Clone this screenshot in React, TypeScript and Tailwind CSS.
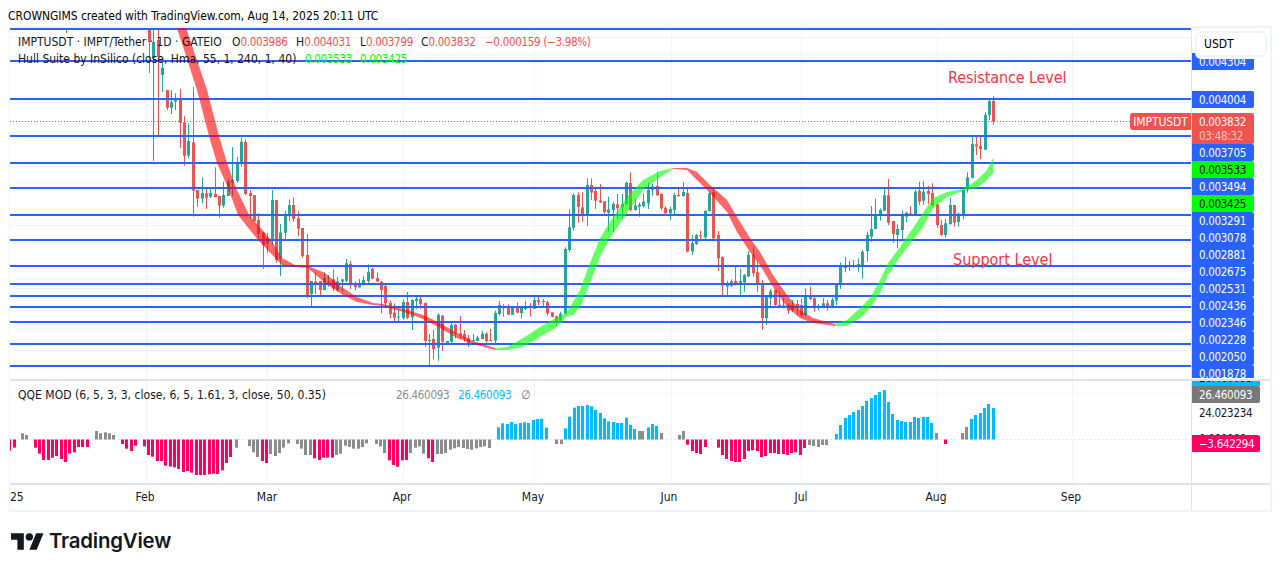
import React from "react";

const G = "#26a69a";
const R = "#ef5350";
type C = [number, number, number, number, number, number];
// [x, high, bodyTop, bodyBottom, low, up(1)/down(0)] in the 3x crop's coordinates
const groups: { x0: number; y0: number; c: C[] }[] = [
  { x0: 0, y0: 0, c: [
    [66*3,84,84,90,99,0],[149*3,84,90,126,219,0],[153*3,84,126,174,483,1],[158*3,84,120,171,411,0],[162*3,171,204,225,276,1],
  ] },
  { x0: 145, y0: 90, c: [
    [67,0,0,53,60,0],[79,0,37,53,72,1],[91,10,25,35,60,1],[106,-3,25,98,173,0],[118,78,97,197,227,0],[130,100,153,197,205,1],
    [145,-9,157,302,380,0],[157,300,300,326,350,0],[172,262,309,326,340,1],[184,292,310,323,357,0],[196,292,309,320,324,1],
    [211,232,312,321,322,0],[223,318,318,347,383,0],[235,275,315,347,353,1],[250,265,275,318,318,1],[262,172,270,278,318,1],
    [277,200,216,273,279,1],[289,143,155,218,230,1],[301,148,156,312,315,0],[316,300,309,318,385,0],[328,315,315,393,395,0],
    [340,370,390,432,450,0],[355,425,428,465,537,0],[367,430,445,460,488,1],[382,300,330,450,465,1],[394,330,330,510,518,0],
    [406,402,427,505,558,1],[421,362,373,428,447,1],[433,328,345,373,393,1],[445,323,345,387,395,0],[460,365,385,416,438,0],
    [472,414,414,498,503,0],[487,432,495,617,625,0],[499,573,573,612,650,1],[511,548,575,580,612,0],[526,573,573,600,615,0],
    [538,547,564,600,600,1],[550,555,577,583,590,1],[565,538,568,595,603,0],[577,561,574,600,605,1],
  ] },
  { x0: 340, y0: 170, c: [
    [7,327,328,335,365,1],[19,267,280,332,337,1],[31,273,282,345,357,0],[46,335,342,352,360,0],[58,327,342,352,353,1],
    [70,318,330,345,347,1],[85,283,306,333,342,1],[97,293,297,326,328,0],[112,307,324,335,336,0],[124,333,336,360,430,0],
    [136,345,348,400,412,0],[151,392,398,432,445,0],[163,400,428,443,455,0],[175,420,440,442,453,1],[190,388,396,444,448,1],
    [202,366,396,443,447,0],[217,388,390,442,480,1],[229,378,387,393,417,1],[241,378,387,402,416,0],[256,397,399,513,530,0],
    [268,492,510,512,585,1],[280,480,507,537,568,0],[295,430,435,533,572,1],[307,435,437,515,543,0],[322,513,513,521,523,1],
    [334,460,465,515,520,1],[346,462,464,490,505,0],[361,438,490,497,505,0],[373,480,492,505,515,0],[385,495,505,520,530,0],
    [400,492,510,513,515,1],[412,497,503,513,514,1],[427,483,491,507,508,1],[439,487,491,513,518,0],[451,477,510,513,514,0],
    [466,422,429,512,524,1],[478,393,405,432,438,1],[490,403,408,415,440,0],[505,403,408,434,435,0],[517,408,408,434,435,1],
    [532,397,412,428,430,0],[544,408,408,429,445,1],[556,392,409,417,420,1],[571,400,410,413,440,0],[583,380,390,416,417,1],
    [595,380,390,396,405,0],[610,387,393,395,408,1],[622,392,396,430,436,0],[637,427,427,441,442,0],[649,437,439,455,467,0],
    [661,425,431,453,457,1],[676,232,237,431,433,1],[688,118,172,240,245,1],[700,70,75,173,182,1],
  ] },
  { x0: 560, y0: 160, c: [
    [55,97,105,140,188,0],[67,97,142,165,185,0],[82,55,75,165,198,1],[94,55,75,98,120,0],[106,80,93,122,147,0],[121,72,121,127,129,0],
    [133,124,124,156,168,0],[145,110,148,158,215,1],[160,125,132,150,217,1],[172,102,133,145,175,0],[187,102,132,142,177,1],
    [199,65,68,133,135,1],[211,37,69,150,155,0],[226,115,137,150,152,1],[238,128,134,140,170,1],[250,100,125,138,142,1],
    [265,68,90,130,147,1],[277,70,79,90,107,1],[292,35,78,106,108,0],[304,100,102,145,150,0],[316,138,144,160,162,0],
    [331,140,147,160,180,1],[343,98,105,150,165,1],[355,82,105,107,110,0],[370,67,96,108,110,1],[382,80,99,275,277,0],
    [397,225,249,274,285,1],[409,222,225,252,255,1],[421,212,226,229,240,0],[436,150,153,232,243,1],[448,95,100,153,155,1],
    [460,85,97,235,238,0],[475,213,225,295,333,0],[487,289,291,377,412,0],[502,362,374,380,406,1],[514,358,364,378,380,1],
    [526,320,363,375,376,0],[541,326,363,375,410,1],[553,342,345,367,395,1],[565,273,285,349,352,1],[580,262,285,340,350,0],
    [592,305,337,372,397,0],
  ] },
  { x0: 760, y0: 90, c: [
    [7,570,578,684,720,0],[19,615,618,684,705,1],[31,597,604,624,655,1],[46,600,600,645,648,0],[58,605,645,652,654,0],
    [70,625,646,652,655,1],[85,640,645,662,672,0],[97,630,645,660,667,1],[112,630,642,648,677,0],[124,625,645,675,680,0],
    [136,595,618,675,677,1],[151,590,616,627,630,0],[163,622,625,655,665,0],[175,642,650,653,662,1],[190,625,640,653,655,1],
    [202,630,640,654,662,0],[217,623,630,652,655,1],[229,580,580,632,645,1],[241,517,528,585,597,1],[256,501,528,534,547,1],
    [268,513,527,531,543,0],[280,510,527,531,533,1],[295,505,522,530,545,1],[307,480,485,528,566,1],[322,425,435,483,515,1],
    [334,348,417,440,455,1],[346,326,376,417,418,1],[361,355,360,378,392,1],[373,295,316,362,363,1],[385,267,316,398,405,0],
    [400,393,393,432,458,0],[412,403,417,435,475,1],[427,362,372,420,450,1],[439,365,368,380,397,1],[451,348,370,375,377,0],
    [466,300,305,373,375,1],[478,275,303,335,345,0],[490,273,305,332,345,1],[505,288,303,312,342,0],[517,279,309,347,348,0],
    [532,340,343,405,413,0],[544,390,405,435,438,0],[556,387,400,435,443,1],[571,324,345,402,404,1],[583,345,345,398,410,0],
    [595,368,371,396,410,1],[610,298,300,375,388,1],[622,247,262,298,308,1],[637,142,162,263,265,1],[649,140,163,170,195,0],
    [661,137,168,177,208,0],[676,67,75,179,180,1],[688,25,33,75,90,1],[700,18,33,95,104,0],
  ] },
];

const hLines = [29, 61, 99, 136, 163, 188, 215, 240, 266, 284, 296, 307, 322, 344, 366];
const vGrid = [146, 267, 403, 534, 671, 801, 937, 1072];

type P = [number, number, number];
const redA: { top: [number, number][]; bot: [number, number][] } = {
  top: [[185,25],[207,90],[219,136],[227,163],[236,188],[249,215],[271,240],[282,258],[295,265],[308,266],[325,273],[343,288]],
  bot: [[176,25],[197,90],[209,136],[217,163],[228,188],[238,215],[258,240],[282,265],[295,267],[308,268],[325,283],[343,295]],
};
const redB: P[] = [[343,288,295],[357,297,302],[373,303,305],[383,304,306],[407,310,313],[423,315,319],[440,323,328],[457,333,338],[473,341,344],[495,348,350]];
const greenA: P[] = [[495,348,350],[507,347,350],[523,338,347],[540,327,337],[557,317,327],[566,313,317],[573,302,315],[580,290,307],[588,268,288],[600,238,257],[610,222,238],[627,197,213],[643,180,190],[660,171,177],[673,168,169]];
const redC: P[] = [[673,168,169],[687,168,170],[697,172,180],[710,185,193],[727,200,212],[737,217,232],[750,238,252],[760,252,265],[773,275,287],[787,295,307],[800,310,318],[813,318,323],[835,324,326]];
const greenB: P[] = [[835,324,326],[847,320,326],[860,308,318],[870,298,308],[880,280,293],[888,263,275],[900,247,257],[913,228,240],[923,213,227],[933,198,208],[947,192,197],[963,189,191],[977,180,188],[987,170,180],[993,158,173]];

const poly = (p: P[]) =>
  [...p.map((a) => `${a[0]},${a[1]}`), ...[...p].reverse().map((a) => `${a[0]},${a[2]}`)].join(" ");
const redAPoly = [...redA.top, ...[...redA.bot].reverse()].map((a) => a.join(",")).join(" ");

const PINK = "#ff0062";
const GRAY = "#8c8c8c";
const CYAN = "#00bcff";
const runs: [number, number, string, number[]][] = [
  [0,23,PINK,[227,218]],[0,53,GRAY,[175,180]],
  [0,85,PINK,[218,236,255,255,248,243,252,261,236,232,216,216,216]],
  [0,235,GRAY,[168,175,172,175,180]],[0,299,PINK,[207,221,228,212]],
  [0,352,PINK,[214,240,245,258,258,272,275,277,282,291,288,293,300,300,300,298,296,297,286,264,246]],
  [0,577,GRAY,[218]],[0,609,GRAY,[213,232,246]],[0,641,PINK,[258,264]],[0,662,GRAY,[237,243,234,218,205]],
  [0,727,GRAY,[207,221,240,240]],[0,770,PINK,[250,255,248,248,248]],[0,823,GRAY,[240,236,212,216,221,221,216,205]],
  [0,920,GRAY,[207,214,234]],[0,952,PINK,[256,270,275,256,255]],[0,1005,GRAY,[234,218,214,236]],[0,1049,PINK,[250,261]],
  [0,1070,GRAY,[237,237,234,224,220,216,219,222,224,220,216,214,219]],
  [0,1220,CYAN,[157,145,147,141,147,144,142,144,135,132,131,158]],[0,1363,GRAY,[207,207]],
  [0,1384,CYAN,[160,125,98,93,93,90,94,105,114,130,139,141,144,144,128,149,162]],[0,1566,GRAY,[168]],
  [640,5,GRAY,[168]],[640,19,CYAN,[157,147,153]],[640,52,GRAY,[174]],[640,95,GRAY,[180,168]],
  [640,116,PINK,[209,228,234,237,216]],
  [640,190,PINK,[218,240,252,258,261,261,252,228,226,228,246,243,234,234,237,237,240,234,232,240,219]],
  [640,414,GRAY,[210,213,216,210,210]],
  [640,480,CYAN,[177,150,129,120,111,105,93,78,69,60,51,45,81,117,135,138,141,141,126,129,126,126,144]],
  [640,726,GRAY,[174]],[640,748,PINK,[207]],[640,789,GRAY,[174,156]],[640,811,CYAN,[132,120,114,99,87,99]],
];

const stack: [string, string, string][] = [
  ["0.003705", "bg-[#2962ff]", "text-white"],
  ["0.003533", "bg-[#00ff00]", "text-black"],
  ["0.003494", "bg-[#2962ff]", "text-white"],
  ["0.003425", "bg-[#00ff00]", "text-black"],
  ["0.003291", "bg-[#2962ff]", "text-white"],
  ["0.003078", "bg-[#2962ff]", "text-white"],
  ["0.002881", "bg-[#2962ff]", "text-white"],
  ["0.002675", "bg-[#2962ff]", "text-white"],
  ["0.002531", "bg-[#2962ff]", "text-white"],
  ["0.002436", "bg-[#2962ff]", "text-white"],
  ["0.002346", "bg-[#2962ff]", "text-white"],
  ["0.002228", "bg-[#2962ff]", "text-white"],
  ["0.002050", "bg-[#2962ff]", "text-white"],
  ["0.001878", "bg-[#2962ff]", "text-white"],
];

const months: [string, number][] = [
  ["Feb", 145], ["Mar", 267], ["Apr", 402], ["May", 533], ["Jun", 669], ["Jul", 801], ["Aug", 936], ["Sep", 1071],
];

function PriceLabel({ text, bg, fg }: { text: string; bg: string; fg: string }) {
  return (
    <div className={`h-[17px] w-[62px] shrink-0 pl-[7px] rounded-r-[2px] text-[11.5px] tracking-[-0.3px] leading-[19px] ${bg} ${fg}`}>{text}</div>
  );
}

export default function App() {
  return (
    <div className="w-[1281px] h-[571px] bg-white overflow-hidden text-[12px] text-[#131722] font-['DejaVu_Sans_Condensed','DejaVu_Sans',sans-serif]">
      <div className="h-[26px] pl-[8px] pt-[8px] text-[12px] leading-[16px] tracking-[-0.05px] text-black">
        CROWNGIMS created with TradingView.com, Aug 14, 2025 20:11 UTC
      </div>

      <div className="ml-[9px] w-[1263px] h-[486px] border-l border-t-2 border-r-2 border-b-2 border-[#f0f3fa] flex flex-col">
        {/* main pane */}
        <div className="h-[351px] flex shrink-0">
          <div className="relative w-[1181px] h-[351px] overflow-hidden">
            <svg width={1181} height={351} viewBox="10 28 1181 351" className="block">
              {[37, 225, 288, 350].map((y) => (
                <line key={y} x1={10} x2={1191} y1={y + 0.5} y2={y + 0.5} stroke="#f0f3fa" />
              ))}
              {vGrid.map((x) => (
                <line key={x} x1={x + 0.5} x2={x + 0.5} y1={28} y2={380} stroke="#f0f3fa" />
              ))}
              {groups.flatMap((g, gi) =>
                g.c.map((c, i) => {
                  const x = Math.round(g.x0 + c[0] / 3);
                  const col = c[5] ? G : R;
                  const y = (v: number) => g.y0 + v / 3;
                  return (
                    <g key={`${gi}-${i}`} fill={col}>
                      <rect x={x} y={y(c[1])} width={1} height={y(c[4]) - y(c[1])} />
                      <rect x={x - 1} y={y(c[2])} width={3} height={Math.max(1, y(c[3]) - y(c[2]))} />
                    </g>
                  );
                })
              )}
              <line x1={10} x2={1130} y1={121.5} y2={121.5} stroke={R} strokeDasharray="1 2" />
              {hLines.map((y) => (
                <rect key={y} x={10} y={y - 1} width={1181} height={2} fill="#2962ff" />
              ))}
              <polygon points={redAPoly} fill="#ff0000" fillOpacity={0.6} />
              <polygon points={poly(redB)} fill="#ff0000" fillOpacity={0.6} />
              <polygon points={poly(greenA)} fill="#00ff00" fillOpacity={0.6} />
              <polygon points={poly(redC)} fill="#ff0000" fillOpacity={0.6} />
              <polygon points={poly(greenB)} fill="#00ff00" fillOpacity={0.6} />
            </svg>

            <div className="absolute left-[8px] top-[6px] flex h-[16px] items-center leading-[16px] whitespace-nowrap">
              <span className="w-[214px]">IMPTUSDT · IMPT/Tether · 1D · GATEIO</span>
              <span className="w-[64px]">O<span className="text-[#ef5350] text-[11.5px] tracking-[-0.3px]">0.003986</span></span>
              <span className="w-[64px]">H<span className="text-[#ef5350] text-[11.5px] tracking-[-0.3px]">0.004031</span></span>
              <span className="w-[61px]">L<span className="text-[#ef5350] text-[11.5px] tracking-[-0.3px]">0.003799</span></span>
              <span className="w-[64px]">C<span className="text-[#ef5350] text-[11.5px] tracking-[-0.3px]">0.003832</span></span>
              <span className="text-[#ef5350] text-[11.5px] tracking-[-0.3px]">−0.000159 (−3.98%)</span>
            </div>
            <div className="absolute left-[8px] top-[23px] flex h-[16px] items-center leading-[16px] whitespace-nowrap">
              <span className="w-[287px]">Hull Suite by InSilico (close, Hma, 55, 1, 240, 1, 40)</span>
              <span className="w-[55px] text-[#00ff00] text-[11.5px] tracking-[-0.3px]">0.003533</span>
              <span className="text-[#00ff00] text-[11.5px] tracking-[-0.3px]">0.003425</span>
            </div>
            <div className="absolute left-[938px] top-[40px] text-[16px] tracking-[-0.1px] leading-[20px] text-[#f23645] whitespace-nowrap">Resistance Level</div>
            <div className="absolute left-[943px] top-[222px] text-[16px] leading-[20px] text-[#f23645] whitespace-nowrap">Support Level</div>
            <div className="absolute left-[1120px] top-[85px] w-[61px] h-[17px] rounded-l-[3px] bg-[#ef5350] text-white text-center text-[12px] tracking-[-0.1px] leading-[18px]">IMPTUSDT</div>
          </div>

          {/* price axis */}
          <div className="relative w-[79px] h-[351px] border-l border-[#e0e3eb]">
            <div className="h-[350px] flex flex-col overflow-hidden">
              <div className="h-[25px] shrink-0" />
              <PriceLabel text="0.004304" bg="bg-[#2962ff]" fg="text-white" />
              <div className="h-[21px] shrink-0" />
              <PriceLabel text="0.004004" bg="bg-[#2962ff]" fg="text-white" />
              <div className="h-[5px] shrink-0" />
              <div className="h-[31px] w-[62px] shrink-0 pl-[7px] rounded-r-[2px] bg-[#ef5350] text-white text-[11.5px] tracking-[-0.3px] leading-[14px] pt-[2px]">
                <div>0.003832</div>
                <div className="text-[#ffc5c3]">03:48:32</div>
              </div>
              {stack.map(([t, b, f]) => (
                <PriceLabel key={t} text={t} bg={b} fg={f} />
              ))}
            </div>
            <div className="absolute left-[3px] top-[3px] w-[72px] h-[26px] bg-white border-2 border-[#f0f3fa] shadow-[0_2px_0_#ffffff] rounded-[6px] pl-[7px] text-[12px] leading-[22px] text-black">USDT</div>
          </div>
        </div>

        {/* QQE pane */}
        <div className="h-[104px] flex shrink-0 border-t-2 border-[#e0e3eb]">
          <div className="relative w-[1181px] h-[102px] overflow-hidden">
            <svg width={1181} height={102} viewBox="10 381 1181 102" className="block">
              <line x1={10} x2={1191} y1={393.5} y2={393.5} stroke="#f0f3fa" strokeDasharray="4 2" />
              {vGrid.map((x) => (
                <line key={x} x1={x + 0.5} x2={x + 0.5} y1={381} y2={483} stroke="#f0f3fa" />
              ))}
              <line x1={10} x2={1191} y1={439.5} y2={439.5} stroke="#e6e8ee" strokeDasharray="2 2" />
              {runs.flatMap(([base, xz, col, vals], ri) =>
                vals.map((v, i) => {
                  const x = Math.round(base + xz / 2.45 + i * 4.33);
                  const yy = 375 + v / 3;
                  const top = Math.min(yy, 439.5);
                  return <rect key={`${ri}-${i}`} x={x - 1} y={top} width={3} height={Math.abs(yy - 439.5)} fill={col} />;
                })
              )}
            </svg>
            <div className="absolute left-[8px] top-[6px] flex h-[16px] items-center leading-[16px] whitespace-nowrap">
              <span className="w-[378px] tracking-[0.03px]">QQE MOD (6, 5, 3, 3, close, 6, 5, 1.61, 3, close, 50, 0.35)</span>
              <span className="w-[62px] text-[#8c8c8c] text-[11.5px] tracking-[-0.3px]">26.460093</span>
              <span className="w-[63px] text-[#00bcff] text-[11.5px] tracking-[-0.3px]">26.460093</span>
              <span className="text-[#787b86]">∅</span>
            </div>
          </div>
          <div className="relative w-[79px] h-[102px] border-l border-[#e0e3eb] overflow-hidden text-[11.5px] tracking-[-0.3px]">
            <div className="absolute left-0 top-[-12px] w-[68px] h-[17px] bg-[#00bcff] pl-[7px] leading-[19px] text-[#131722]">26.460093</div>
            <div className="absolute left-0 top-[5px] w-[68px] h-[17px] bg-[#787878] pl-[7px] leading-[19px] text-white rounded-r-[2px]">26.460093</div>
            <div className="absolute left-[7px] top-[23px] h-[17px] leading-[19px] text-[#131722]">24.023234</div>
            <div className="absolute left-[7px] top-[49px] h-[17px] leading-[19px] text-[#131722]">0.000000</div>
            <div className="absolute left-0 top-[54px] w-[68px] h-[17px] bg-[#ff0062] pl-[7px] leading-[19px] text-white rounded-r-[2px]">−3.642294</div>
          </div>
        </div>

        {/* time axis */}
        <div className="flex-1 flex border-t-2 border-[#e0e3eb]">
          <div className="relative w-[1181px] overflow-hidden leading-[25px] text-[#131722]">
            <span className="absolute left-0 top-0">25</span>
            {months.map(([m, x]) => (
              <span key={m} className="absolute top-0 -translate-x-1/2" style={{ left: x - 10 }}>{m}</span>
            ))}
          </div>
          <div className="flex-1 border-l border-[#e0e3eb]" />
        </div>
      </div>

      {/* logo */}
      <div className="ml-[11px] mt-[17px] flex items-center gap-[5px] text-[#131722]">
        <svg width="33" height="17" viewBox="0 4 36 18" fill="#131722" className="shrink-0">
          <path d="M14 22H7V11H0V4h14v18zM28 22h-8l7.5-18h8L28 22z" />
          <circle cx="20" cy="8" r="4" />
        </svg>
        <span className="font-['Inter',sans-serif] font-semibold text-[20.4px] leading-[24px] tracking-[-0.2px]">TradingView</span>
      </div>
    </div>
  );
}
